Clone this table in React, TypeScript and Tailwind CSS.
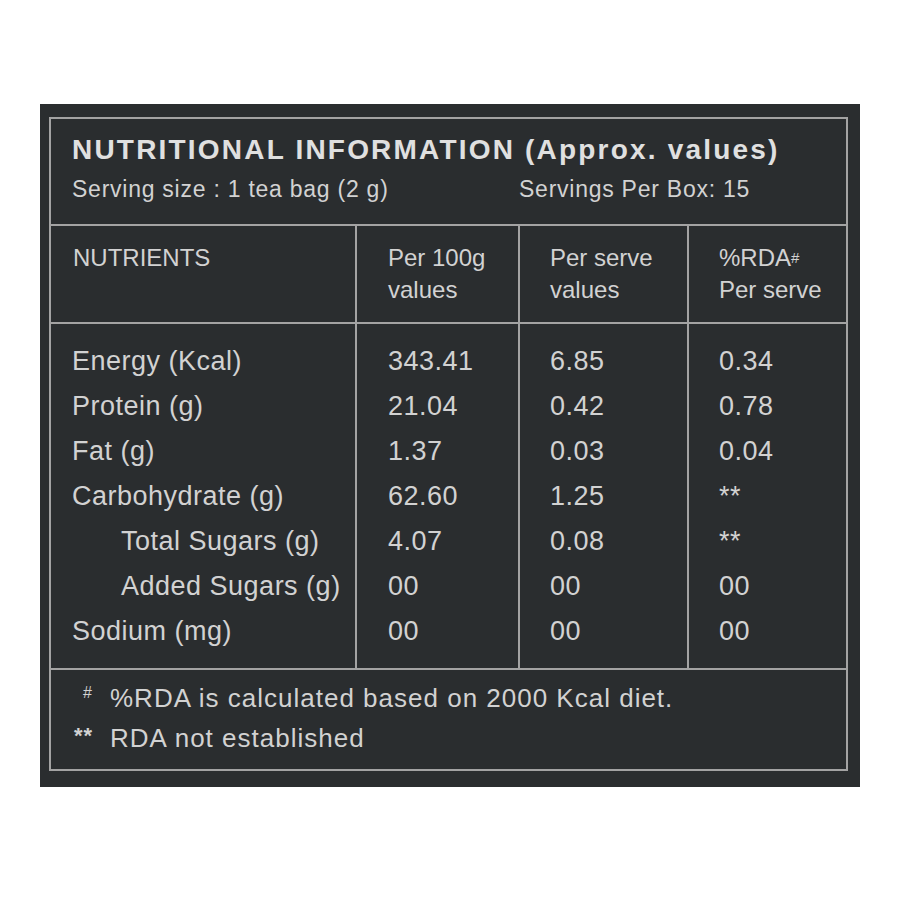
import React from "react";

const rows: { name: string; indent?: boolean; v: [string, string, string] }[] = [
  { name: "Energy (Kcal)", v: ["343.41", "6.85", "0.34"] },
  { name: "Protein (g)", v: ["21.04", "0.42", "0.78"] },
  { name: "Fat (g)", v: ["1.37", "0.03", "0.04"] },
  { name: "Carbohydrate (g)", v: ["62.60", "1.25", "**"] },
  { name: "Total Sugars (g)", indent: true, v: ["4.07", "0.08", "**"] },
  { name: "Added Sugars (g)", indent: true, v: ["00", "00", "00"] },
  { name: "Sodium (mg)", v: ["00", "00", "00"] },
];

export default function App() {
  return (
    <div
      className="min-h-[900px] bg-white pt-[104px] pl-[40px]"
      style={{ fontFamily: '"Liberation Sans", Arial, sans-serif' }}
    >
      <div className="w-[820px] h-[683px] bg-[#2a2d2f] pt-[13px] pl-[9px] pr-[12px]">
        <div className="h-[654px] border-2 border-[#a3a3a3] flex flex-col text-[#d2d2d2]">
          {/* Header */}
          <div className="h-[107px] border-b-2 border-[#a3a3a3] pt-[14px] pl-[21px]">
            <div className="text-[28px] leading-[34px] font-bold tracking-[2.2px] text-[#e0e0e0]">
              NUTRITIONAL INFORMATION (Approx. values)
            </div>
            <div className="mt-[7px] flex text-[23px] leading-[30px] tracking-[0.75px]">
              <span className="w-[447px]">Serving size : 1 tea bag (2 g)</span>
              <span>Servings Per Box: 15</span>
            </div>
          </div>

          {/* Table */}
          <div className="grid grid-cols-[306px_163px_169px_1fr]">
            <div className="h-[98px] border-r-2 border-b-2 border-[#a3a3a3] pt-[16px] pl-[22px] text-[24px] leading-[32px]">
              NUTRIENTS
            </div>
            <div className="h-[98px] border-r-2 border-b-2 border-[#a3a3a3] pt-[16px] pl-[31px] text-[24px] leading-[32px]">
              <div>Per 100g</div>
              <div>values</div>
            </div>
            <div className="h-[98px] border-r-2 border-b-2 border-[#a3a3a3] pt-[16px] pl-[30px] text-[24px] leading-[32px]">
              <div>Per serve</div>
              <div>values</div>
            </div>
            <div className="h-[98px] border-b-2 border-[#a3a3a3] pt-[16px] pl-[30px] text-[24px] leading-[32px]">
              <div>
                %RDA<sup className="text-[15px] relative top-[-3px]">#</sup>
              </div>
              <div>Per serve</div>
            </div>

            <div className="h-[346px] border-r-2 border-b-2 border-[#a3a3a3] pt-[15px] pl-[21px] text-[27px] leading-[45px] tracking-[0.5px]">
              {rows.map((r) => (
                <div key={r.name} className={r.indent ? "pl-[49px]" : ""}>
                  {r.name}
                </div>
              ))}
            </div>
            {[0, 1, 2].map((c) => (
              <div
                key={c}
                className={
                  c === 2
                    ? "h-[346px] border-b-2 border-[#a3a3a3] pt-[15px] pl-[30px] text-[27px] leading-[45px] tracking-[0.5px]"
                    : c === 0
                    ? "h-[346px] border-r-2 border-b-2 border-[#a3a3a3] pt-[15px] pl-[31px] text-[27px] leading-[45px] tracking-[0.5px]"
                    : "h-[346px] border-r-2 border-b-2 border-[#a3a3a3] pt-[15px] pl-[30px] text-[27px] leading-[45px] tracking-[0.5px]"
                }
              >
                {rows.map((r) => (
                  <div key={r.name}>{r.v[c]}</div>
                ))}
              </div>
            ))}
          </div>

          {/* Footer */}
          <div className="pt-[8px] pl-[17px] text-[26px] leading-[40px] tracking-[1px]">
            <div className="flex">
              <span className="w-[25px] text-right text-[16px] leading-[30px]">#</span>
              <span className="ml-[17px]">%RDA is calculated based on 2000 Kcal diet.</span>
            </div>
            <div className="flex">
              <span className="w-[25px] text-right text-[22px] leading-[36px] font-bold tracking-[1px]">**</span>
              <span className="ml-[17px]">RDA not established</span>
            </div>
          </div>
        </div>
      </div>
    </div>
  );
}
